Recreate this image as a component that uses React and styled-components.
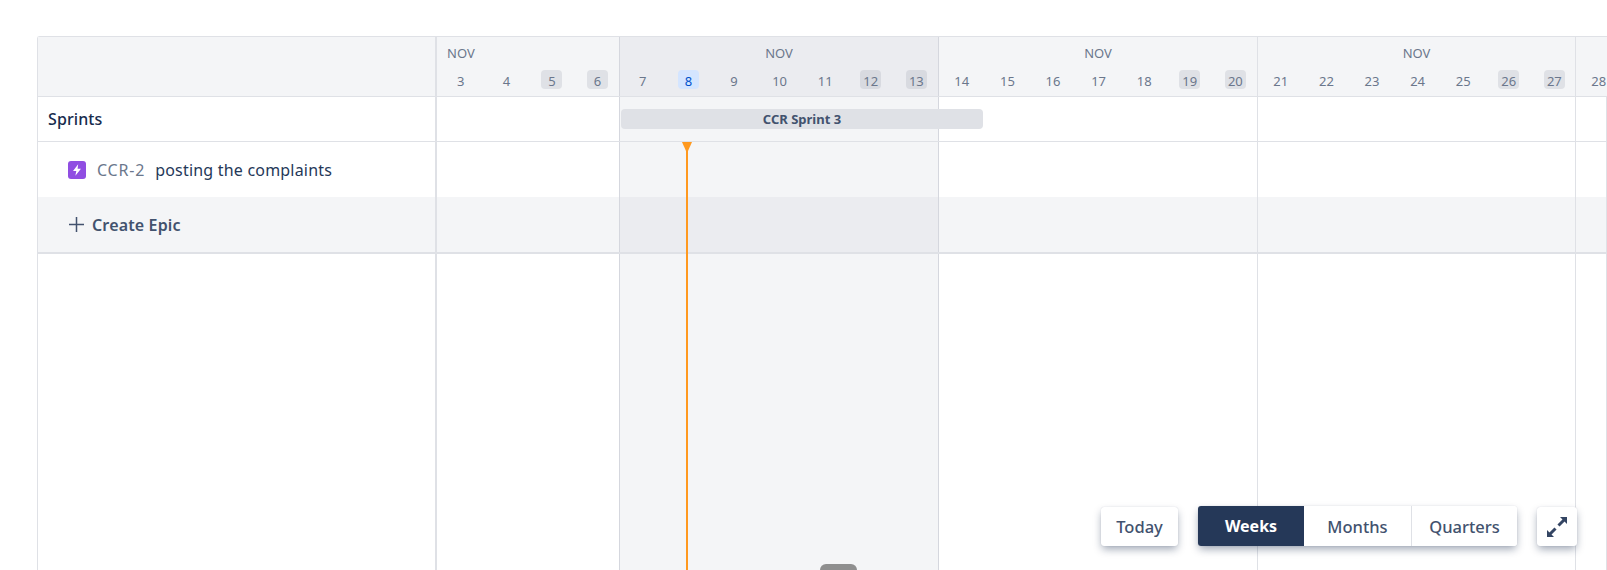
import React from "react";
import styled, { createGlobalStyle } from "styled-components";

const Global = createGlobalStyle`
  html, body { margin: 0; padding: 0; height: 570px; overflow: hidden; background: #fff; }
  body { font-family: "Noto Sans", "Open Sans", sans-serif; color: #172b4d; }
  #root { height: 570px; }
`;

const Page = styled.div`
  height: 570px;
  padding: 36px 0 0 37px;
  box-sizing: border-box;
  position: relative;
  overflow: hidden;
`;

const Board = styled.div`
  position: relative;
  height: 534px;
  width: 1570px;
  display: flex;
  flex-direction: column;
  border-top: 1px solid #dfe1e6;
  border-left: 1px solid #dfe1e6;
  border-top-left-radius: 3px;
  box-sizing: border-box;
`;

const Row = styled.div`
  display: flex;
  height: ${(p) => p.$height}px;
  flex: ${(p) => (p.$grow ? "1" : "none")};
  box-sizing: border-box;
  background: ${(p) => p.$bg || "#fff"};
  border-bottom: ${(p) => p.$rule || 0}px solid #dfe1e6;
`;

const Side = styled.div`
  width: 399px;
  flex: none;
  box-sizing: border-box;
  border-right: 2px solid #dfe1e6;
  display: flex;
  align-items: center;
  padding-left: ${(p) => p.$indent || 0}px;
`;

const Cell = styled.div`
  position: relative;
  box-sizing: border-box;
  width: ${(p) => p.$width}px;
  flex: ${(p) => (p.$width ? "none" : "1")};
  background: ${(p) => p.$shade || "transparent"};
  border-right: 1px solid ${(p) => (p.$dark ? "#d5d7de" : "#dfe1e6")};
`;

const HeadCell = styled(Cell)`
  display: flex;
  flex-direction: column;
  padding-top: 7px;
`;

const Month = styled.div`
  height: 18px;
  line-height: 19px;
  font-size: 13px;
  color: #6b778c;
  text-align: ${(p) => (p.$left ? "left" : "center")};
  padding-left: ${(p) => (p.$left ? "10px" : "0")};
  margin-bottom: 8px;
`;

const Days = styled.div`
  display: grid;
  grid-template-columns: repeat(${(p) => p.$count}, 45.6px);
  justify-content: start;
  padding-left: ${(p) => (p.$inset ? "1px" : "0")};
`;

const Day = styled.div`
  justify-self: center;
  width: 21px;
  height: 19px;
  line-height: 22px;
  text-align: center;
  font-size: 13px;
  border-radius: 4px;
  color: ${(p) => (p.$tone === "today" ? "#0052cc" : "#6b778c")};
  background: ${(p) =>
    p.$tone === "today"
      ? "#d4e5ff"
      : p.$tone === "weekendDark"
      ? "#d8dae0"
      : p.$tone === "weekend"
      ? "#dfe1e6"
      : "transparent"};
`;

const SprintsLabel = styled.span`
  font-size: 16px;
  font-weight: 500;
  color: #172b4d;
  letter-spacing: 0.1px;
`;

const SprintBar = styled.div`
  position: absolute;
  left: 1px;
  top: 12px;
  width: 362px;
  height: 20px;
  border-radius: 4px;
  background: #dfe1e6;
  color: #42526e;
  font-size: 13px;
  font-weight: 700;
  line-height: 20px;
  text-align: center;
`;

const TypeIcon = styled.span`
  width: 18px;
  height: 18px;
  border-radius: 3px;
  background: #904ee2;
  display: inline-flex;
  align-items: center;
  justify-content: center;
  margin-right: 11px;
  flex: none;
`;

const IssueKey = styled.span`
  font-size: 16px;
  color: #6b778c;
  margin-right: 10px;
  letter-spacing: 0.8px;
`;

const IssueTitle = styled.span`
  font-size: 16px;
  color: #253858;
  letter-spacing: 0.2px;
`;

const CreateLabel = styled.span`
  font-size: 16px;
  font-weight: 600;
  color: #42526e;
  margin-left: 7px;
  letter-spacing: 0.15px;
`;

const TodayLine = styled.div`
  position: absolute;
  left: 648px;
  top: 105px;
  bottom: 0;
  width: 2px;
  background: #ff991f;
`;

const TodayMark = styled.svg`
  position: absolute;
  left: 644px;
  top: 105px;
`;

const Controls = styled.div`
  position: absolute;
  right: 30px;
  bottom: 24px;
  display: flex;
  align-items: flex-end;
  gap: 20px;
`;

const Button = styled.button`
  height: 39px;
  padding: 0;
  width: ${(p) => p.$width}px;
  border: 0;
  border-radius: 3px;
  background: #fff;
  font-family: inherit;
  font-size: 16.5px;
  font-weight: 500;
  color: #42526e;
  box-shadow: 0 4px 8px -1px rgba(9, 30, 66, 0.4), 0 0 1px rgba(9, 30, 66, 0.2);
  display: flex;
  align-items: center;
  justify-content: center;
`;

const Segments = styled.div`
  display: flex;
  height: 40px;
  border-radius: 3px;
  background: #fff;
  box-shadow: 0 4px 8px -1px rgba(9, 30, 66, 0.4), 0 0 1px rgba(9, 30, 66, 0.2);
  overflow: hidden;
`;

const Segment = styled.button`
  width: ${(p) => p.$width}px;
  padding: 0;
  border: 0;
  border-right: ${(p) => (p.$rule ? "1px solid #dfe1e6" : "0")};
  background: ${(p) => (p.$active ? "#253858" : "#fff")};
  color: ${(p) => (p.$active ? "#fff" : "#42526e")};
  font-family: inherit;
  font-size: ${(p) => (p.$active ? "16px" : "16.5px")};
  font-weight: ${(p) => (p.$active ? 700 : 500)};
`;

const ScrollHandle = styled.div`
  position: absolute;
  left: 820px;
  bottom: 0;
  width: 37px;
  height: 6px;
  border-radius: 6px 6px 0 0;
  background: #8f8f8f;
`;

const weeks = [
  { width: 183, dark: true, days: [3, 4, 5, 6], left: true },
  { width: 319, dark: true, shaded: true, days: [7, 8, 9, 10, 11, 12, 13] },
  { width: 319, days: [14, 15, 16, 17, 18, 19, 20] },
  { width: 318, days: [21, 22, 23, 24, 25, 26, 27] },
  { days: [28], last: true },
];

const weekend = new Set([5, 6, 12, 13, 19, 20, 26, 27]);

const toneOf = (d, shaded) => {
  if (d === 8) return "today";
  if (weekend.has(d)) return shaded ? "weekendDark" : "weekend";
  return undefined;
};

const WeekCells = ({ shade, children }) =>
  weeks.map((w, i) => (
    <Cell key={i} $width={w.width} $dark={w.dark} $shade={w.shaded ? shade : undefined}>
      {w.shaded ? children : null}
    </Cell>
  ));

const Bolt = () => (
  <svg width="14" height="14" viewBox="0 0 12 12">
    <path d="M7 1 L2.6 6.8 H5.4 L4.6 11 L9.4 4.9 H6.5 Z" fill="#fff" />
  </svg>
);

const Plus = () => (
  <svg width="17" height="17" viewBox="0 0 17 17">
    <path d="M8.5 1v15M1 8.5h15" stroke="#42526e" strokeWidth="1.5" fill="none" />
  </svg>
);

const Expand = () => (
  <svg width="22" height="22" viewBox="0 0 22 22" fill="none">
    <path d="M12.5 9.5 L18 4" stroke="#344563" strokeWidth="3" />
    <path d="M14 1 H21 V8 Z" fill="#344563" />
    <path d="M9.5 12.5 L4 18" stroke="#344563" strokeWidth="3" />
    <path d="M1 14 V21 H8 Z" fill="#344563" />
  </svg>
);

export default function App() {
  return (
    <>
      <Global />
      <Page>
        <Board>
          <Row $height={60} $rule={1} $bg="#f4f5f7">
            <Side />
            {weeks.map((w, i) => (
              <HeadCell key={i} $width={w.width} $dark={w.dark} $shade={w.shaded ? "#ebecf0" : undefined}>
                <Month $left={w.left}>{w.last ? "" : "NOV"}</Month>
                <Days $count={w.days.length} $inset={w.left}>
                  {w.days.map((d) => (
                    <Day key={d} $tone={toneOf(d, w.shaded)}>
                      {d}
                    </Day>
                  ))}
                </Days>
              </HeadCell>
            ))}
          </Row>
          <Row $height={45} $rule={1}>
            <Side $indent={10}>
              <SprintsLabel>Sprints</SprintsLabel>
            </Side>
            <WeekCells shade="#f4f5f7">
              <SprintBar>CCR Sprint 3</SprintBar>
            </WeekCells>
          </Row>
          <Row $height={55}>
            <Side $indent={30}>
              <TypeIcon>
                <Bolt />
              </TypeIcon>
              <IssueKey>CCR-2</IssueKey>
              <IssueTitle>posting the complaints</IssueTitle>
            </Side>
            <WeekCells shade="#f4f5f7" />
          </Row>
          <Row $height={57} $rule={2} $bg="#f4f5f7">
            <Side $indent={30}>
              <Plus />
              <CreateLabel>Create Epic</CreateLabel>
            </Side>
            <WeekCells shade="#ebecf0" />
          </Row>
          <Row $grow>
            <Side />
            <WeekCells shade="#f4f5f7" />
          </Row>
          <TodayLine />
          <TodayMark width="10" height="9" viewBox="0 0 10 9">
            <path d="M0 0 H10 L6 9 H4 Z" fill="#ff991f" />
          </TodayMark>
        </Board>
        <Controls>
          <Button $width={77}>Today</Button>
          <Segments>
            <Segment $active $width={106}>
              Weeks
            </Segment>
            <Segment $rule $width={108}>
              Months
            </Segment>
            <Segment $width={105}>Quarters</Segment>
          </Segments>
          <Button $width={40}>
            <Expand />
          </Button>
        </Controls>
        <ScrollHandle />
      </Page>
    </>
  );
}
